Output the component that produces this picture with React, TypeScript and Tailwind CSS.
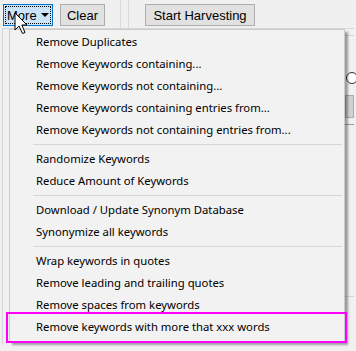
import React from "react";

const groups: string[][] = [
  [
    "Remove Duplicates",
    "Remove Keywords containing...",
    "Remove Keywords not containing...",
    "Remove Keywords containing entries from...",
    "Remove Keywords not containing entries from...",
  ],
  ["Randomize Keywords", "Reduce Amount of Keywords"],
  ["Download / Update Synonym Database", "Synonymize all keywords"],
  [
    "Wrap keywords in quotes",
    "Remove leading and trailing quotes",
    "Remove spaces from keywords",
    "Remove keywords with more that xxx words",
  ],
];

// --- mouse pointer drawn over the More button ---
const Cursor = () => (
  <svg width="15" height="24" viewBox="0 0 15 24" className="absolute left-[14px] top-[12px]">
    <path
      d="M1 1 L1 18 L5 14 L8.5 21.5 L11 20.5 L7.8 13 L13 13 Z"
      fill="#fff"
      stroke="#000"
      strokeWidth="1"
      strokeLinejoin="miter"
    />
  </svg>
);

export default function App() {
  return (
    <div className="relative w-[356px] h-[351px] overflow-hidden bg-[#f0f0f0] font-['Liberation_Sans',sans-serif] text-black">
      {/* toolbar */}
      <div className="flex items-start pt-[4px] pl-[3px] h-[28px]">
        <div className="w-[50px] h-[22px] border border-[#0078d7] bg-[#cce4f7] p-[1px]">
          <div className="h-full border border-dotted border-black flex items-center justify-between pl-[1px] pr-[1px] text-[13px] leading-none">
            <span>More</span>
            <span className="w-0 h-0 border-l-[4px] border-r-[4px] border-t-[4px] border-l-transparent border-r-transparent border-t-black" />
          </div>
        </div>
        <div className="ml-[7px] w-[45px] h-[22px] border border-[#adadad] bg-[#e1e1e1] flex items-center justify-center text-[13px] leading-none">
          Clear
        </div>
        <div className="ml-[15px] w-px h-[28px] -mt-[4px] bg-[#d9d9d9]" />
        <div className="ml-[7px] w-px h-[28px] -mt-[4px] bg-[#d9d9d9]" />
        <div className="ml-[16px] w-[110px] h-[22px] border border-[#adadad] bg-[#e1e1e1] flex items-center justify-center text-[13px] leading-none">
          Start Harvesting
        </div>
      </div>

      {/* content behind the menu */}
      <div className="mx-[2px] h-[317px] border-t border-l border-[#d5d5d5] flex justify-end">
        <div className="w-[9px] flex flex-col">
          <div className="mt-[6px] h-px bg-[#d5d5d5]" />
          <div className="mt-[36px] ml-[1px] w-[12px] h-[12px] rounded-full border border-[#333] bg-white" />
          <div className="mt-[11px] h-[23px] border border-[#adadad] bg-[#d0d0d0]" />
          <div className="mt-[6px] h-px bg-[#a0a0a0]" />
          <div className="mt-[171px] h-px bg-[#d5d5d5]" />
        </div>
      </div>

      {/* dropdown menu */}
      <div className="absolute left-[9px] top-[29px] w-[336px] border border-[#cccccc] bg-[#f2f2f2] pt-[1px] pb-[3px] shadow-[3px_3px_2px_rgba(0,0,0,0.35)] font-['Noto_Sans',sans-serif] text-[11.3px]">
        {groups.map((g, gi) => (
          <div key={gi}>
            {gi > 0 && (
              <div className="py-[3px] pl-[23px] pr-[2px]">
                <div className="h-px bg-[#d7d7d7]" />
              </div>
            )}
            {g.map((item) => (
              <div key={item} className="h-[22px] flex items-center pl-[26px] leading-none whitespace-nowrap">
                {item}
              </div>
            ))}
          </div>
        ))}
      </div>

      {/* highlight box */}
      <div className="absolute left-[6px] top-[312px] w-[341px] h-[31px] border-2 border-[#ff00ff]" />

      <Cursor />
    </div>
  );
}
